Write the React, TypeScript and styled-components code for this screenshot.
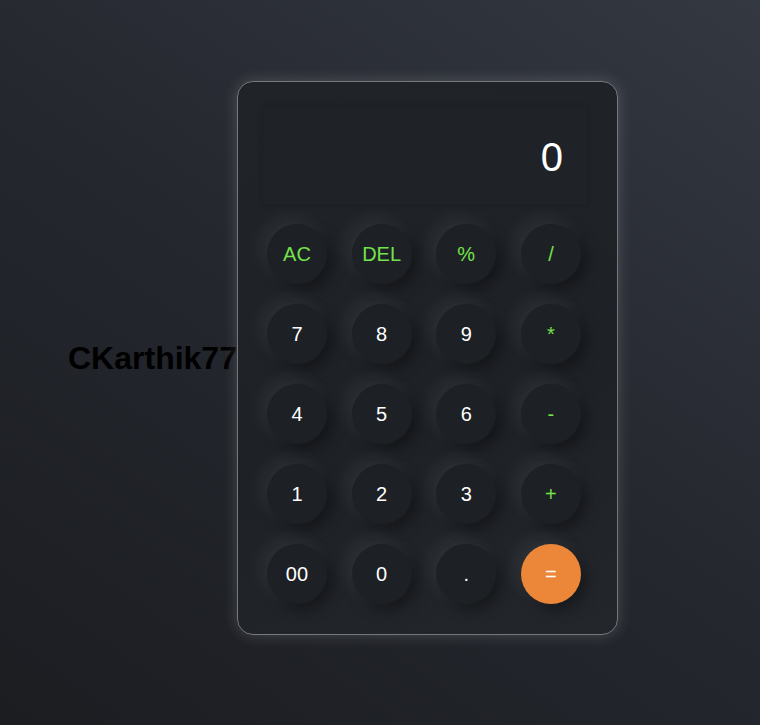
import React from "react";
import styled, { createGlobalStyle } from "styled-components";

const GlobalStyle = createGlobalStyle`
  * {
    box-sizing: border-box;
  }
  html, body {
    margin: 0;
    padding: 0;
  }
  body {
    font-family: "Liberation Sans", Arial, sans-serif;
    background: linear-gradient(35deg, #1b1d21 0%, #24272e 50%, #343841 100%);
    min-height: 100vh;
  }
`;

const Page = styled.div`
  display: flex;
  align-items: center;
  min-height: 725px;
  padding: 0 0 9px 68px;
`;

const Title = styled.h1`
  margin: 0;
  font-size: 32px;
  font-weight: 700;
  color: #000;
  white-space: nowrap;
`;

const Calculator = styled.div`
  flex: none;
  width: 381px;
  height: 554px;
  padding: 25px 30px 30px 25px;
  border: 1px solid #75787d;
  border-radius: 16px;
  background: linear-gradient(160deg, #202328 0%, #1e2126 60%, #23262b 100%);
  box-shadow: 0 0 15px rgba(255, 255, 255, 0.18);
  display: flex;
  flex-direction: column;
  gap: 20px;
`;

const Display = styled.div`
  height: 98px;
  display: flex;
  align-items: center;
  justify-content: flex-end;
  padding: 4px 24px 0 0;
  background: #1f2227;
  box-shadow: 0 0 6px rgba(0, 0, 0, 0.18), inset 0 0 4px rgba(255, 255, 255, 0.015);
  color: #fff;
  font-size: 40px;
`;

const Keypad = styled.div`
  display: grid;
  grid-template-columns: repeat(4, 60px);
  justify-content: space-between;
  row-gap: 20px;
  padding: 0 6px 0 4px;
`;

type Kind = "num" | "op" | "equal";

const Key = styled.button<{ $kind: Kind }>`
  width: 60px;
  height: 60px;
  border: none;
  border-radius: 50%;
  font-family: "Liberation Sans", Arial, sans-serif;
  font-size: 20px;
  cursor: pointer;
  color: ${(p) => (p.$kind === "op" ? "#74e24b" : "#ffffff")};
  background: ${(p) => (p.$kind === "equal" ? "#ec8638" : "#1d2025")};
  box-shadow: -6px -6px 18px rgba(255, 255, 255, 0.07),
    6px 6px 14px rgba(0, 0, 0, 0.35);
`;

const keys: { label: string; kind: Kind }[] = [
  { label: "AC", kind: "op" },
  { label: "DEL", kind: "op" },
  { label: "%", kind: "op" },
  { label: "/", kind: "op" },
  { label: "7", kind: "num" },
  { label: "8", kind: "num" },
  { label: "9", kind: "num" },
  { label: "*", kind: "op" },
  { label: "4", kind: "num" },
  { label: "5", kind: "num" },
  { label: "6", kind: "num" },
  { label: "-", kind: "op" },
  { label: "1", kind: "num" },
  { label: "2", kind: "num" },
  { label: "3", kind: "num" },
  { label: "+", kind: "op" },
  { label: "00", kind: "num" },
  { label: "0", kind: "num" },
  { label: ".", kind: "num" },
  { label: "=", kind: "equal" },
];

const App = () => {
  const [value, setValue] = React.useState("0");

  const handleKey = (label: string) => {
    if (label === "AC") return setValue("0");
    if (label === "DEL") return setValue((v) => (v.length > 1 ? v.slice(0, -1) : "0"));
    if (label === "=") {
      try {
        // eslint-disable-next-line no-new-func
        const result = Function(`return (${value})`)();
        setValue(String(result));
      } catch {
        setValue("0");
      }
      return;
    }
    setValue((v) => (v === "0" && label !== "." ? label : v + label));
  };

  return (
    <>
      <GlobalStyle />
      <Page>
        <Title>CKarthik77</Title>
        <Calculator>
          <Display>{value}</Display>
          <Keypad>
            {keys.map((k) => (
              <Key key={k.label} $kind={k.kind} onClick={() => handleKey(k.label)}>
                {k.label}
              </Key>
            ))}
          </Keypad>
        </Calculator>
      </Page>
    </>
  );
};

export default App;
